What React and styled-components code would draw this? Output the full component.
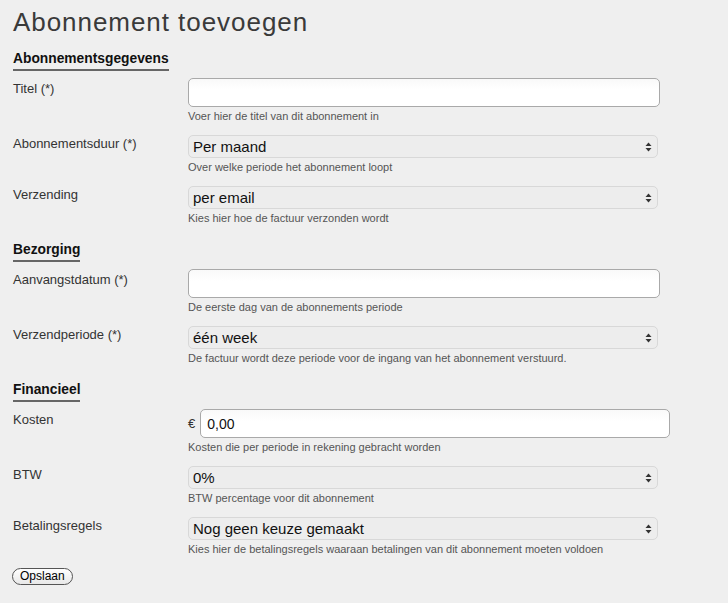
import React from 'react';
import styled, { createGlobalStyle } from 'styled-components';

const GlobalStyle = createGlobalStyle`
	html, body {
		margin: 0;
		padding: 0;
		background: #efefef;
	}
	body {
		font-family: 'Liberation Sans', Arial, Helvetica, sans-serif;
		color: #333;
	}
`;

const sections = [
	{
		title: 'Abonnementsgegevens',
		fields: [
			{ label: 'Titel (*)', type: 'text', help: 'Voer hier de titel van dit abonnement in' },
			{ label: 'Abonnementsduur (*)', type: 'select', value: 'Per maand', help: 'Over welke periode het abonnement loopt' },
			{ label: 'Verzending', type: 'select', value: 'per email', help: 'Kies hier hoe de factuur verzonden wordt' },
		],
	},
	{
		title: 'Bezorging',
		fields: [
			{ label: 'Aanvangstdatum (*)', type: 'text', help: 'De eerste dag van de abonnements periode' },
			{ label: 'Verzendperiode (*)', type: 'select', value: 'één week', help: 'De factuur wordt deze periode voor de ingang van het abonnement verstuurd.' },
		],
	},
	{
		title: 'Financieel',
		fields: [
			{ label: 'Kosten', type: 'money', value: '0,00', help: 'Kosten die per periode in rekening gebracht worden' },
			{ label: 'BTW', type: 'select', value: '0%', help: 'BTW percentage voor dit abonnement' },
			{ label: 'Betalingsregels', type: 'select', value: 'Nog geen keuze gemaakt', help: 'Kies hier de betalingsregels waaraan betalingen van dit abonnement moeten voldoen' },
		],
	},
];

function ArrowIcon() {
	return (
		<Arrow width="7" height="10" viewBox="0 0 7 10">
			<path d="M3.5 0.5 L6.5 4 H0.5 Z" fill="#333" />
			<path d="M3.5 9.5 L6.5 6 H0.5 Z" fill="#333" />
		</Arrow>
	);
}

function Field({ field }) {
	let control;
	if (field.type === 'select') {
		control = (
			<SelectWrap>
				<Select defaultValue={field.value}>
					<option>{field.value}</option>
				</Select>
				<ArrowIcon />
			</SelectWrap>
		);
	} else if (field.type === 'money') {
		control = (
			<Money>
				<span>€</span>
				<TextInput type="text" defaultValue={field.value} $narrow />
			</Money>
		);
	} else {
		control = <TextInput type="text" />;
	}

	return (
		<Row>
			<Label $select={field.type === 'select'}>{field.label}</Label>
			<Control>
				{control}
				<Help>{field.help}</Help>
			</Control>
		</Row>
	);
}

export default function App() {
	return (
		<>
			<GlobalStyle />
			<Page>
				<Title>Abonnement toevoegen</Title>
				{sections.map((section) => (
					<Section key={section.title}>
						<SectionTitle>{section.title}</SectionTitle>
						{section.fields.map((field) => (
							<Field key={field.label} field={field} />
						))}
					</Section>
				))}
				<SaveButton>Opslaan</SaveButton>
			</Page>
		</>
	);
}

const Page = styled.div`
	padding: 0 13px 20px;
`;

const Title = styled.h1`
	margin: 0;
	padding-top: 6px;
	font-size: 26px;
	line-height: 32px;
	font-weight: normal;
	letter-spacing: 0.95px;
	color: #3a3a3a;
`;

const Section = styled.section`
	margin-top: 13px;

	& + & {
		margin-top: 17px;
	}
`;

const SectionTitle = styled.h2`
	width: fit-content;
	margin: 0 0 7px;
	padding-bottom: 2px;
	font-size: 13.8px;
	line-height: 16px;
	font-weight: bold;
	color: #111;
	border-bottom: 2px solid #666;
`;

const Row = styled.div`
	display: grid;
	grid-template-columns: 175px 1fr;
	margin-bottom: 12px;
`;

const Label = styled.label`
	padding-top: ${(props) => (props.$select ? '1px' : '3px')};
	font-size: 13px;
	line-height: 16px;
	color: #333;
`;

const Control = styled.div`
	display: flex;
	flex-direction: column;
`;

const TextInput = styled.input`
	box-sizing: border-box;
	width: ${(props) => (props.$narrow ? '470px' : '472px')};
	height: 29px;
	margin: 0;
	padding: 0 6px;
	border: 1px solid #a9a9a9;
	border-radius: 5px;
	background: linear-gradient(#f9f9f9, #ffffff 40%);
	font-family: 'Liberation Sans', Arial, sans-serif;
	font-size: 14px;
	color: #111;
	outline: none;
`;

const Money = styled.div`
	display: flex;
	align-items: center;
	gap: 5px;

	span {
		font-size: 13px;
		color: #333;
	}
`;

const SelectWrap = styled.div`
	position: relative;
	width: 470px;
`;

const Select = styled.select`
	box-sizing: border-box;
	width: 100%;
	height: 23px;
	margin: 0;
	padding: 0 4px;
	appearance: none;
	-webkit-appearance: none;
	border: 1px solid #d8d8d8;
	border-radius: 5px;
	background: #ededed;
	font-family: 'Liberation Sans', Arial, sans-serif;
	font-size: 15px;
	color: #111;
	outline: none;
`;

const Arrow = styled.svg`
	position: absolute;
	right: 6px;
	top: 6.5px;
	pointer-events: none;
`;

const Help = styled.div`
	margin-top: 3px;
	font-size: 11px;
	line-height: 13px;
	color: #555;
`;

const SaveButton = styled.button`
	display: block;
	margin: 0 0 0 -1px;
	height: 17px;
	padding: 0 7px;
	border: 1px solid #555;
	border-radius: 9px;
	background: linear-gradient(#ffffff, #e8e8e8);
	font-family: 'Liberation Sans', Arial, sans-serif;
	font-size: 12px;
	line-height: 15px;
	color: #000;
`;
